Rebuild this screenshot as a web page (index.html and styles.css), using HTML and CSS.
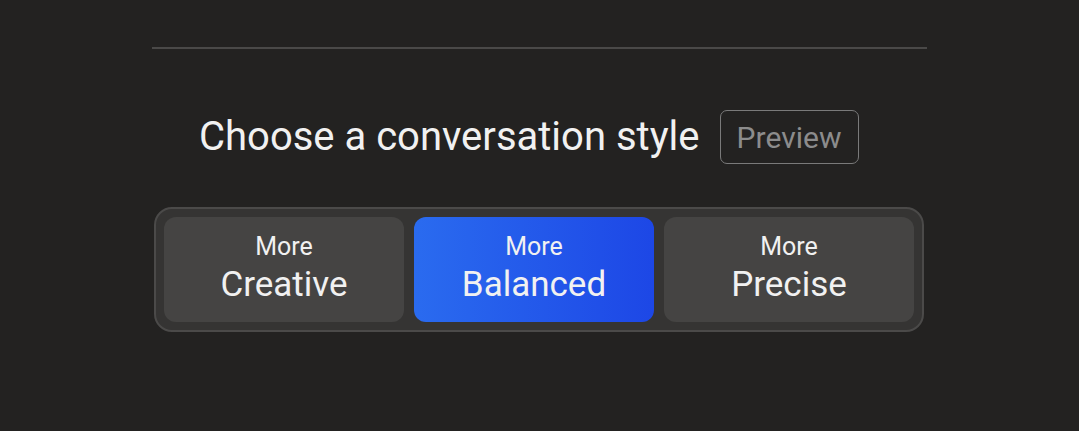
FILE: index.html
```html
<!DOCTYPE html>
<html>
<head>
<meta charset="utf-8">
<link rel="stylesheet" href="styles.css">
</head>
<body>
<div class="page">
  <div class="divider"></div>
  <div class="title-row">
    <h1 class="title">Choose a conversation style</h1>
    <span class="badge">Preview</span>
  </div>
  <div class="selector">
    <button class="opt opt-creative"><span class="more">More</span><span class="name">Creative</span></button>
    <button class="opt opt-balanced active"><span class="more">More</span><span class="name">Balanced</span></button>
    <button class="opt opt-precise"><span class="more">More</span><span class="name">Precise</span></button>
  </div>
</div>
</body>
</html>
```

FILE: styles.css
```css
html, body {
  margin: 0;
  padding: 0;
  background: #232221;
}
body {
  font-family: Roboto, "Liberation Sans", sans-serif;
  color: #f1f1f1;
  width: 1079px;
  height: 431px;
  overflow: hidden;
}
.page {
  display: flex;
  flex-direction: column;
  align-items: flex-start;
  padding-top: 47px;
}
.divider {
  margin-left: 152px;
  width: 775px;
  height: 2px;
  background: #4a4948;
}
.title-row {
  display: flex;
  align-items: center;
  margin-top: 61px;
  margin-left: 199px;
  gap: 20px;
}
.title {
  margin: 0;
  font-weight: 400;
  font-size: 40px;
  line-height: 54px;
  color: #f1f1f1;
}
.badge {
  box-sizing: border-box;
  height: 54px;
  width: 139px;
  border: 1.5px solid #7a7a7a;
  border-radius: 7px;
  font-size: 30px;
  color: #8c8c8c;
  display: flex;
  align-items: center;
  justify-content: center;
}
.selector {
  margin-top: 43px;
  margin-left: 154px;
  display: flex;
  gap: 10px;
  padding: 8px;
  border: 2px solid #4b4a49;
  border-radius: 18px;
  background: #353433;
}
.opt {
  border: none;
  margin: 0;
  height: 105px;
  border-radius: 12px;
  background: #454443;
  color: #f1f1f1;
  font-family: inherit;
  display: flex;
  flex-direction: column;
  align-items: center;
  justify-content: center;
  padding: 0;
}
.opt-creative, .opt-balanced { width: 240px; }
.opt-precise { width: 250px; }
.opt.active {
  background: linear-gradient(90deg, #2a6bef 0%, #1d47e6 100%);
}
.more {
  font-size: 25px;
  line-height: 30px;
}
.name {
  font-size: 35px;
  line-height: 46px;
}
```
